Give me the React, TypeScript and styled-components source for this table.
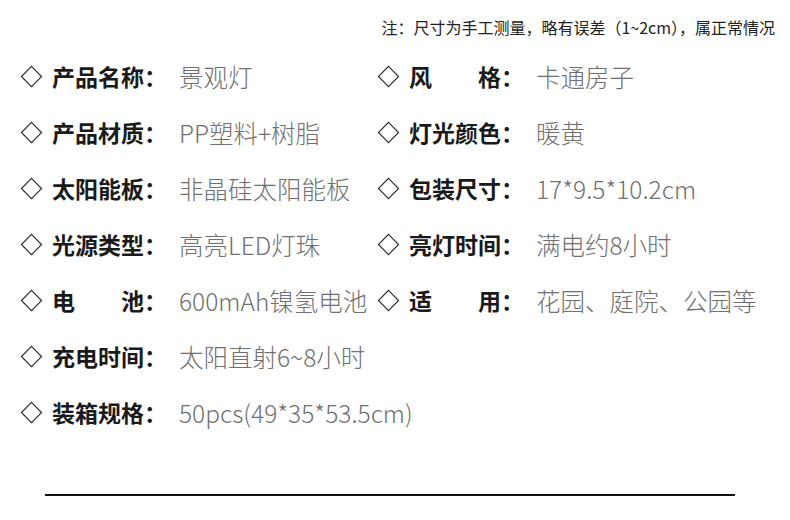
import React, { FC } from "react"
import styled, { createGlobalStyle } from "styled-components"

interface ISpec {
  name: string
  value: string
}

const left: ISpec[] = [
  { name: "产品名称", value: "景观灯" },
  { name: "产品材质", value: "PP塑料+树脂" },
  { name: "太阳能板", value: "非晶硅太阳能板" },
  { name: "光源类型", value: "高亮LED灯珠" },
  { name: "电池", value: "600mAh镍氢电池" },
  { name: "充电时间", value: "太阳直射6~8小时" },
  { name: "装箱规格", value: "50pcs(49*35*53.5cm)" },
]

const right: ISpec[] = [
  { name: "风格", value: "卡通房子" },
  { name: "灯光颜色", value: "暖黄" },
  { name: "包装尺寸", value: "17*9.5*10.2cm" },
  { name: "亮灯时间", value: "满电约8小时" },
  { name: "适用", value: "花园、庭院、公园等" },
]

const Diamond: FC = () => (
  <Icon viewBox="0 0 24 24">
    <path d="M12 1.5 L22.5 12 L12 22.5 L1.5 12 Z" fill="none" stroke="#2a2a2a" strokeWidth="1.2" />
  </Icon>
)

const Item: FC<{ spec: ISpec }> = ({ spec }) => (
  <Row>
    <Diamond />
    <Label>
      <Name spread={spec.name.length < 4}>{spec.name}</Name>：
    </Label>
    <Value>{spec.value}</Value>
  </Row>
)

const App: FC = () => {
  const cells: (ISpec | null)[] = []
  left.forEach((l, i) => {
    cells.push(l)
    cells.push(right[i] || null)
  })

  return (
    <Page>
      <GlobalStyle />
      <Note>注：尺寸为手工测量，略有误差（1~2cm），属正常情况</Note>
      <Grid>
        {cells.map((c, i) => (c ? <Item key={i} spec={c} /> : <Row key={i} />))}
      </Grid>
      <Rule />
    </Page>
  )
}

export default App

//---------------------------STYLES-------------------------------------------//

const GlobalStyle = createGlobalStyle`
  body {
    margin: 0;
    background: #fff;
    font-family: "Noto Sans CJK SC", "Noto Sans", sans-serif;
  }
`

const Page = styled.div`
  width: 790px;
  height: 520px;
  background: #fff;
  overflow: hidden;
`

const Note = styled.div`
  padding: 16px 15px 0 0;
  height: 22px;
  line-height: 22px;
  font-size: 16px;
  color: #222;
  text-align: right;
  margin-bottom: 10px;
`

const Grid = styled.div`
  display: grid;
  grid-template-columns: 357px 1fr;
  grid-auto-rows: 56px;
  padding-left: 20px;
`

const Row = styled.div`
  display: flex;
  align-items: center;
  white-space: nowrap;
`

const Icon = styled.svg`
  width: 23px;
  height: 23px;
  flex-shrink: 0;
  margin-right: 9px;
`

const Label = styled.div`
  display: flex;
  font-size: 23px;
  font-weight: 700;
  color: #1a1a1a;
`

const Name = styled.span<{ spread: boolean }>`
  display: inline-block;
  width: 92px;
  text-align: ${props => (props.spread ? "justify" : "left")};
  text-align-last: ${props => (props.spread ? "justify" : "left")};
`

const Value = styled.div`
  margin-left: 12px;
  font-size: 24.5px;
  font-weight: 300;
  color: #707070;
`

const Rule = styled.div`
  margin: 54px 0 0 45px;
  width: 690px;
  height: 2px;
  background: #111;
`
